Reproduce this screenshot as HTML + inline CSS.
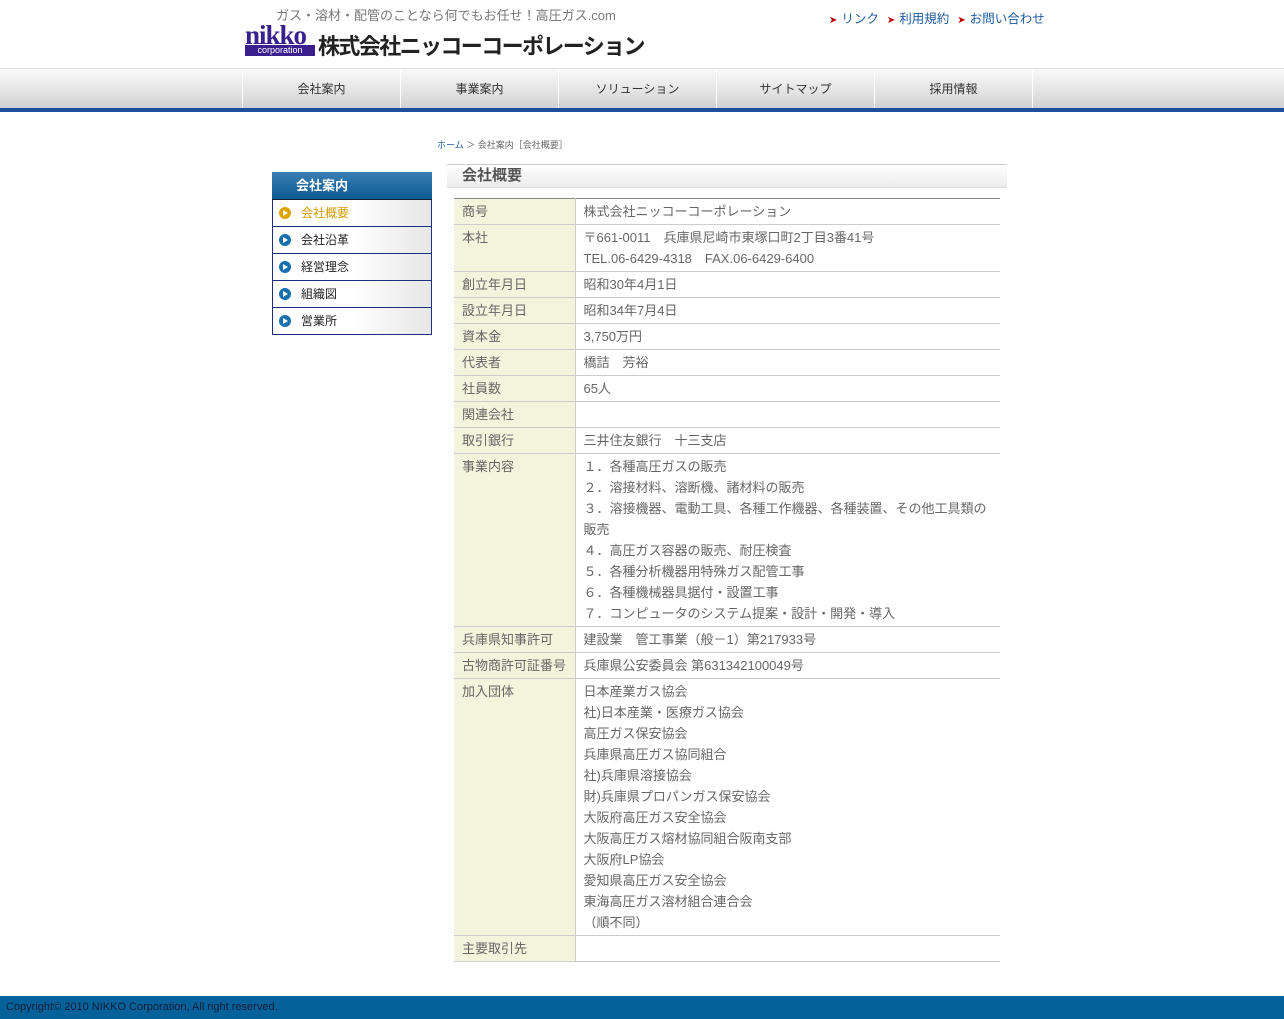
<!DOCTYPE html>
<html><head><meta charset="utf-8"><style>
*{margin:0;padding:0;box-sizing:border-box}
body{width:1284px;height:1019px;position:relative;background:#fff;font-family:"Liberation Sans","Noto Sans CJK JP",sans-serif;color:#555;overflow:hidden}
.a{position:absolute}
#tag{left:276px;top:5px;font-size:13px;color:#777}
#links{left:829px;top:8px;font-size:12.5px;color:#1a5aa0}
#links span{color:#b00;font-size:10px;margin-right:4px}
#links b{font-weight:normal;margin-right:8px}
#logo{left:245px;top:27px;width:70px;height:29px;background:#fff}
#logo .n{font:bold 27px "Liberation Serif",serif;color:#3a1f8f;line-height:17px;letter-spacing:-1px}
#logo .c{background:#3a1f8f;color:#fff;font-size:9px;line-height:11px;text-align:center;margin-top:1px}
#co{left:318px;top:29px;font-size:22px;color:#222;font-weight:bold;letter-spacing:-1.6px}
#nav{left:0;top:68px;width:1284px;height:40px;background:linear-gradient(#fafafa,#e6e6e6 50%,#d2d2d2);border-top:1px solid #e0e0e0}
#bar{left:0;top:108px;width:1284px;height:4px;background:#1d4f9c}
.ni{position:absolute;top:0;height:44px;width:158px;border-left:1px solid #fff;text-align:center;font-size:12px;color:#333;line-height:40px}
#bc{left:437px;top:138px;font-size:9px;color:#666}
#bc i{font-style:normal;color:#1a5aa0}
#side{left:272px;top:172px;width:160px}
#side .h{height:28px;background:linear-gradient(#3a7fb5,#0d5a92);color:#fff;font-size:13px;font-weight:bold;line-height:28px;padding-left:24px;border-bottom:1px solid #123}
#side .it{height:27px;border:1px solid #1b2f80;border-top:none;background:linear-gradient(90deg,#fff 50%,#e6e6e6);font-size:12px;color:#222;line-height:27px;padding-left:28px;position:relative}
#side .it:before{content:"";position:absolute;left:6px;top:7px;width:12px;height:12px;border-radius:50%;background:#1770b0}
#side .it:after{content:"";position:absolute;left:10px;top:10px;border-left:5px solid #fff;border-top:3px solid transparent;border-bottom:3px solid transparent}
#side .it.on{color:#d69a00}
#side .it.on:before{background:#e0a400}
#ttl{left:447px;top:164px;width:560px;height:24px;background:linear-gradient(#fff,#ececec);border-top:1px solid #ccc;border-bottom:1px solid #ddd;font-size:15px;font-weight:bold;color:#555;padding-left:15px;line-height:22px}
table{position:absolute;left:454px;top:198px;width:546px;border-collapse:collapse;border-top:1px solid #888;font-size:13px;table-layout:fixed}
td{padding:2px 8px 2px;line-height:21px;border-bottom:1px solid #ccc;vertical-align:top;color:#666}
td.l{background:#f4f3dc;border-right:1px solid #ccc;white-space:nowrap;padding-right:2px}
#ft{left:0;top:996px;width:1284px;height:23px;background:#046199;font-size:11px;color:#10203a;padding:5px 6px}
</style></head><body>
<div class="a" id="tag">ガス・溶材・配管のことなら何でもお任せ！高圧ガス.com</div>
<div class="a" id="links"><span>➤</span><b>リンク</b><span>➤</span><b>利用規約</b><span>➤</span><b>お問い合わせ</b></div>
<div class="a" id="logo"><div class="n">nikko</div><div class="c">corporation</div></div>
<div class="a" id="co">株式会社ニッコーコーポレーション</div>
<div class="a" id="nav">
<div class="ni" style="left:242px">会社案内</div><div class="ni" style="left:400px">事業案内</div><div class="ni" style="left:558px">ソリューション</div><div class="ni" style="left:716px">サイトマップ</div><div class="ni" style="left:874px">採用情報</div><div class="ni" style="left:1032px;width:1px"></div>
</div>
<div class="a" id="bar"></div>
<div class="a" id="bc"><i>ホーム</i> ＞ 会社案内［会社概要］</div>
<div class="a" id="side"><div class="h">会社案内</div>
<div class="it on">会社概要</div><div class="it">会社沿革</div><div class="it">経営理念</div><div class="it">組織図</div><div class="it">営業所</div></div>
<div class="a" id="ttl">会社概要</div>
<table>
<colgroup><col style="width:121px"><col></colgroup>
<tr><td class="l">商号</td><td>株式会社ニッコーコーポレーション</td></tr>
<tr><td class="l">本社</td><td>〒661-0011　兵庫県尼崎市東塚口町2丁目3番41号<br>TEL.06-6429-4318　FAX.06-6429-6400</td></tr>
<tr><td class="l">創立年月日</td><td>昭和30年4月1日</td></tr>
<tr><td class="l">設立年月日</td><td>昭和34年7月4日</td></tr>
<tr><td class="l">資本金</td><td>3,750万円</td></tr>
<tr><td class="l">代表者</td><td>橋詰　芳裕</td></tr>
<tr><td class="l">社員数</td><td>65人</td></tr>
<tr><td class="l">関連会社</td><td>&nbsp;</td></tr>
<tr><td class="l">取引銀行</td><td>三井住友銀行　十三支店</td></tr>
<tr><td class="l">事業内容</td><td>１．各種高圧ガスの販売<br>２．溶接材料、溶断機、諸材料の販売<br>３．溶接機器、電動工具、各種工作機器、各種装置、その他工具類の販売<br>４．高圧ガス容器の販売、耐圧検査<br>５．各種分析機器用特殊ガス配管工事<br>６．各種機械器具据付・設置工事<br>７．コンピュータのシステム提案・設計・開発・導入</td></tr>
<tr><td class="l">兵庫県知事許可</td><td>建設業　管工事業（般－1）第217933号</td></tr>
<tr><td class="l">古物商許可証番号</td><td>兵庫県公安委員会 第631342100049号</td></tr>
<tr><td class="l">加入団体</td><td>日本産業ガス協会<br>社)日本産業・医療ガス協会<br>高圧ガス保安協会<br>兵庫県高圧ガス協同組合<br>社)兵庫県溶接協会<br>財)兵庫県プロパンガス保安協会<br>大阪府高圧ガス安全協会<br>大阪高圧ガス熔材協同組合阪南支部<br>大阪府LP協会<br>愛知県高圧ガス安全協会<br>東海高圧ガス溶材組合連合会<br>（順不同）</td></tr>
<tr><td class="l">主要取引先</td><td>&nbsp;</td></tr>
</table>
<div class="a" id="ft">Copyright© 2010 NIKKO Corporation, All right reserved.</div>
</body></html>
